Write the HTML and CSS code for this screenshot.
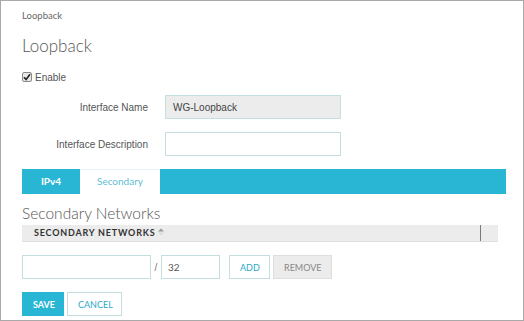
FILE: index.html
```html
<!DOCTYPE html>
<html lang="en">
<head>
    <meta charset="UTF-8">
    <title>Loopback</title>
    <link rel="stylesheet" href="styles.css">
</head>
<body>
    <div class="frame">
        <div class="breadcrumb">Loopback</div>
        <h1>Loopback</h1>
        <label class="enable">
            <span class="check">
                <svg width="8" height="8" viewBox="0 0 8 8"><path d="M1 4.2 L3.1 6.5 L7 1.3" fill="none" stroke="#222" stroke-width="1.6"/></svg>
            </span>
            Enable
        </label>
        <div class="form-row">
            <label for="ifName">Interface Name</label>
            <input type="text" id="ifName" class="readonly" value="WG-Loopback">
        </div>
        <div class="form-row">
            <label for="ifDesc">Interface Description</label>
            <input type="text" id="ifDesc">
        </div>
        <div class="tabs">
            <div class="tab">IPv4</div>
            <div class="tab active">Secondary</div>
        </div>
        <h2>Secondary Networks</h2>
        <div class="grid-head">
            <div class="col-main">SECONDARY NETWORKS
                <svg class="sort" width="6" height="8" viewBox="0 0 6 8">
                    <path d="M0 3.5 L3 0.5 L6 3.5 Z" fill="#9a9a9a"/>
                    <path d="M0 4.5 L3 7.5 L6 4.5 Z" fill="#dcdcdc"/>
                </svg>
            </div>
            <div class="col-rest"></div>
        </div>
        <div class="add-row">
            <input type="text" class="ip">
            <span class="slash">/</span>
            <input type="text" class="mask" value="32">
            <button class="btn btn-outline">ADD</button>
            <button class="btn btn-disabled">REMOVE</button>
        </div>
        <div class="actions">
            <button class="btn btn-primary">SAVE</button>
            <button class="btn btn-outline">CANCEL</button>
        </div>
    </div>
</body>
</html>
```

FILE: styles.css
```css
* {
    margin: 0;
    padding: 0;
    box-sizing: border-box;
}
body {
    background-color: white;
    font-family: 'Liberation Sans', Arial, sans-serif;
}
.frame {
    width: 524px;
    height: 321px;
    border: 1px solid #a9a9a9;
    padding: 9px 0 0 21px;
    overflow: hidden;
}
.breadcrumb {
    font-family: 'Lato', sans-serif;
    font-size: 9.5px;
    color: #666;
    line-height: 12px;
}
h1 {
    font-family: 'Lato', sans-serif;
    font-weight: 300;
    font-size: 17px;
    color: #555;
    line-height: 20px;
    margin-top: 14px;
}
.enable {
    display: flex;
    align-items: center;
    gap: 3px;
    margin-top: 15px;
    font-size: 10px;
    color: #555;
    height: 12px;
}
.check {
    width: 10px;
    height: 10px;
    border: 1px solid #8a8a8a;
    border-radius: 2px;
    background: #e8e8e8;
    display: flex;
    align-items: center;
    justify-content: center;
}
.form-row {
    display: flex;
    align-items: center;
    gap: 17px;
    margin-top: 12px;
}
.form-row + .form-row {
    margin-top: 13px;
}
.form-row label {
    width: 126px;
    text-align: right;
    font-size: 10px;
    color: #555;
}
.form-row input {
    width: 176px;
    height: 24px;
    border: 1px solid #c5dfe0;
    padding: 0 7px;
    font-family: 'Liberation Sans', Arial, sans-serif;
    font-size: 10px;
    color: #444;
    background: white;
}
.form-row input.readonly {
    background: #ececec;
}
.tabs {
    display: flex;
    width: 484px;
    height: 25px;
    margin-top: 13px;
    background: #29b6d5;
}
.tab {
    width: 58px;
    font-family: 'Lato', sans-serif;
    font-weight: bold;
    font-size: 10px;
    color: white;
    text-align: center;
    line-height: 24px;
}
.tab.active {
    width: 80px;
    background: white;
    font-weight: normal;
    color: #5fbdd3;
    border-top: 1px solid #e6f4f7;
    line-height: 22px;
}
h2 {
    font-family: 'Lato', sans-serif;
    font-weight: 300;
    font-size: 15.5px;
    color: #555;
    line-height: 20px;
    margin-top: 9px;
}
.grid-head {
    display: flex;
    width: 476px;
    height: 17px;
    margin-top: 2px;
    background: #ececec;
    border-bottom: 1px solid #dedede;
}
.col-main {
    width: 459px;
    border-right: 1px solid #7a7a7a;
    padding-left: 12px;
    font-family: 'Lato', sans-serif;
    font-weight: bold;
    font-size: 9px;
    letter-spacing: 0.8px;
    color: #333;
    line-height: 16px;
    display: flex;
    align-items: center;
    gap: 3px;
}
.col-main .sort {
    margin-top: -2px;
}
.col-rest {
    flex: 1;
}
.add-row {
    display: flex;
    align-items: center;
    margin-top: 13px;
}
.add-row input {
    height: 24px;
    border: 1px solid #c5dfe0;
    padding: 0 6px;
    font-family: 'Lato', sans-serif;
    font-size: 10px;
    color: #555;
}
.add-row .ip {
    width: 129px;
}
.slash {
    width: 10px;
    text-align: center;
    font-size: 10px;
    color: #777;
}
.add-row .mask {
    width: 59px;
    margin-right: 9px;
}
.btn {
    height: 24px;
    font-family: 'Lato', sans-serif;
    font-size: 9px;
    cursor: pointer;
    padding: 0 10px;
}
.btn-outline {
    background: white;
    border: 1px solid #c5dfe0;
    color: #2aa9c8;
}
.btn-disabled {
    background: #ececec;
    border: 1px solid #dedede;
    color: #888;
    margin-left: 3px;
    width: 59px;
}
.add-row .btn-outline {
    width: 41px;
}
.actions {
    display: flex;
    gap: 3px;
    margin-top: 13px;
}
.btn-primary {
    width: 42px;
    background: #29b6d5;
    border: 1px solid #29b6d5;
    color: white;
    font-weight: bold;
}
.actions .btn-outline {
    width: 55px;
}
```
